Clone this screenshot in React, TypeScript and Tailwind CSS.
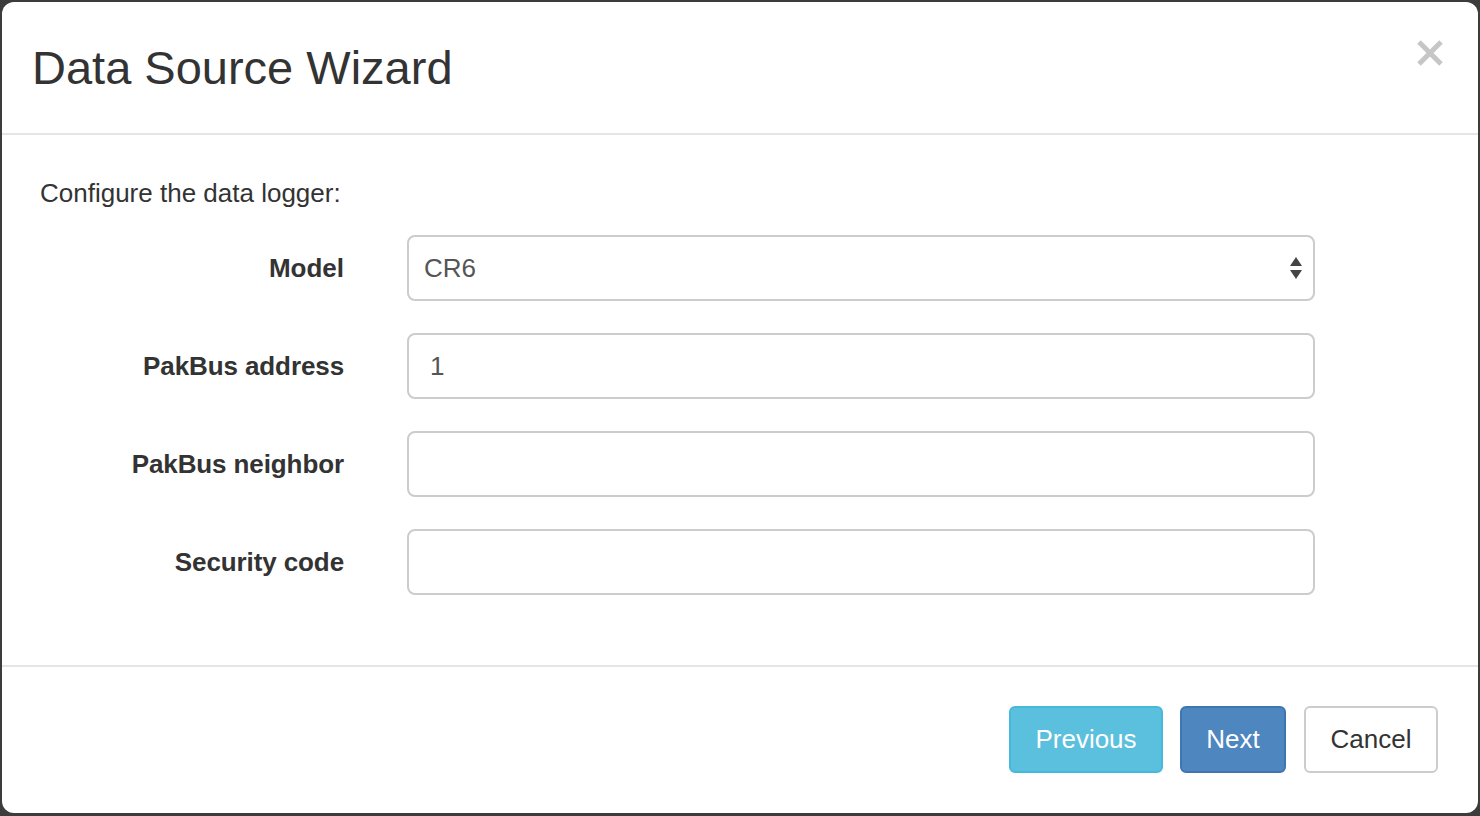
import React from 'react';

const font = { fontFamily: '"Liberation Sans", Arial, sans-serif' };

const fields = [
  { label: 'PakBus address', value: '1' },
  { label: 'PakBus neighbor', value: '' },
  { label: 'Security code', value: '' },
];

const SelectArrows = () => (
  <svg width="12" height="22" viewBox="0 0 12 22" className="text-[#444]">
    <path d="M6 0 L12 9 L0 9 Z" fill="currentColor" />
    <path d="M0 13 L12 13 L6 22 Z" fill="currentColor" />
  </svg>
);

const CloseIcon = () => (
  <svg width="28" height="26" viewBox="0 0 28 26">
    <path d="M3 2 L25 24 M25 2 L3 24" stroke="#c6c6c6" strokeWidth="5" />
  </svg>
);

export default function App() {
  return (
    <div
      className="w-full h-[816px] bg-[#3c3c3c] pt-[2px] pl-[2px] pr-[2px] pb-[3px]"
      style={font}
    >
      <div className="h-full bg-white rounded-[12px] flex flex-col overflow-hidden text-[#333]">
        {/* header */}
        <div className="h-[133px] shrink-0 border-b-2 border-[#e5e5e5] pl-[30px] pr-[34px] flex items-center justify-between">
          <h4 className="text-[47px] leading-none font-medium">Data Source Wizard</h4>
          <button className="self-start mt-[38px]">
            <CloseIcon />
          </button>
        </div>

        {/* body */}
        <div className="h-[532px] shrink-0 border-b-2 border-[#e5e5e5] pl-[38px] pt-[40px]">
          <p className="text-[26px] leading-[36px]">Configure the data logger:</p>
          <div className="mt-[24px] flex flex-col gap-[32px]">
            <div className="flex items-center">
              <label className="w-[304px] text-right font-bold text-[26px]">Model</label>
              <div className="ml-[63px] w-[908px] h-[66px] border-2 border-[#ccc] rounded-[8px] pl-[15px] pr-[11px] flex items-center justify-between text-[26px] text-[#555]">
                <span>CR6</span>
                <SelectArrows />
              </div>
            </div>
            {fields.map((f) => (
              <div key={f.label} className="flex items-center">
                <label className="w-[304px] text-right font-bold text-[26px] tracking-[-0.1px]">{f.label}</label>
                <input
                  defaultValue={f.value}
                  className="ml-[63px] w-[908px] h-[66px] border-2 border-[#ccc] rounded-[8px] px-[21px] text-[26px] text-[#555] outline-none"
                  style={font}
                />
              </div>
            ))}
          </div>
        </div>

        {/* footer */}
        <div className="flex-1 flex items-start justify-end pt-[39px] pr-[40px]">
          <button className="w-[154px] h-[67px] text-[26px] text-white bg-[#5bc0de] border-2 border-[#46b8da] rounded-[6px]">
            Previous
          </button>
          <button className="ml-[17px] w-[106px] h-[67px] text-[26px] text-white bg-[#4e86c0] border-2 border-[#3f76b1] rounded-[6px]">
            Next
          </button>
          <button className="ml-[18px] w-[134px] h-[67px] text-[26px] text-[#333] bg-white border-2 border-[#ccc] rounded-[6px]">
            Cancel
          </button>
        </div>
      </div>
    </div>
  );
}
